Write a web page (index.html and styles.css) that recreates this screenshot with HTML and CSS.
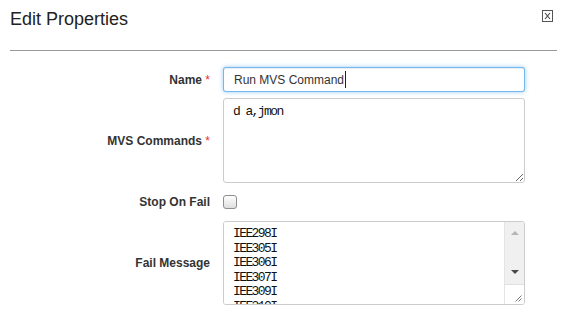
FILE: index.html
```html
<!DOCTYPE html>
<html>
<head>
<meta charset="utf-8">
<link rel="stylesheet" href="styles.css">
</head>
<body>
<header class="modal-header">
  <h3 class="title">Edit Properties</h3>
  <button class="close" type="button" aria-label="Close">
    <svg width="11" height="12" viewBox="0 0 11 12"><rect x="0.5" y="0.5" width="10" height="11" fill="#fff" stroke="#555"/><path d="M3 3 L8 9 M8 3 L3 9" stroke="#444" stroke-width="1.1" fill="none"/></svg>
  </button>
</header>
<form class="form">
  <label class="lbl" for="name">Name <span class="req">*</span></label>
  <div class="input-wrap">
    <input id="name" class="input is-focus" type="text" value="Run MVS Command">
    <span class="caret"></span>
  </div>

  <label class="lbl" for="cmds">MVS Commands <span class="req">*</span></label>
  <textarea id="cmds" class="textarea">d a,jmon</textarea>

  <label class="lbl" for="stop">Stop On Fail</label>
  <div class="check-cell"><input id="stop" class="check" type="checkbox"></div>

  <label class="lbl" for="msg">Fail Message</label>
  <div class="scroll-box">
    <textarea id="msg" class="textarea plain">IEE298I
IEE305I
IEE306I
IEE307I
IEE309I
IEE310I
IEE311I</textarea>
    <div class="scrollbar">
      <div class="track">
        <span class="arrow up"></span>
        <span class="arrow down"></span>
      </div>
      <div class="corner">
        <svg width="8" height="8" viewBox="0 0 8 8"><path d="M7.5 1.5 L1.5 7.5 M7.5 4.5 L4.5 7.5" stroke="#777" stroke-width="1" fill="none"/></svg>
      </div>
    </div>
  </div>
</form>
</body>
</html>
```

FILE: styles.css
```css
* { box-sizing: border-box; }
html, body { margin: 0; padding: 0; background: #fff; }
body {
  font-family: "Liberation Sans", Arial, sans-serif;
  color: #333;
  width: 566px;
  height: 311px;
  overflow: hidden;
}
.modal-header {
  margin: 0 9px 0 10px;
  height: 51px;
  border-bottom: 1px solid #9a9a9a;
  display: flex;
  justify-content: space-between;
  align-items: flex-start;
}
.title {
  margin: 0;
  padding-top: 9px;
  font-size: 18px;
  line-height: 20px;
  font-weight: normal;
  color: #222;
}
.close {
  margin: 10px 4px 0 0;
  padding: 0;
  border: 0;
  background: none;
  width: 11px;
  height: 12px;
  display: block;
}
.close svg { display: block; }
.form {
  margin-top: 16px;
  display: grid;
  grid-template-columns: 210px 302px;
  grid-template-rows: 25px 85px 26px 84px;
  column-gap: 13px;
  row-gap: 6px;
  align-items: center;
}
.lbl {
  justify-self: end;
  text-align: right;
  font-size: 12px;
  font-weight: bold;
  color: #333;
  white-space: nowrap;
}
.req { color: #e8322f; font-weight: normal; }
.input-wrap { position: relative; height: 25px; }
.input {
  display: block;
  width: 302px;
  height: 25px;
  margin: 0;
  padding: 0 10px;
  border: 1px solid #ccc;
  border-radius: 3px;
  font-family: "Liberation Sans", Arial, sans-serif;
  font-size: 12px;
  color: #333;
  outline: none;
}
.input.is-focus {
  border-color: rgba(82, 168, 236, 0.8);
  box-shadow: inset 0 1px 1px rgba(0,0,0,0.075), 0 0 4px rgba(82, 168, 236, 0.6);
}
.caret {
  position: absolute;
  left: 122px;
  top: 4px;
  width: 1px;
  height: 17px;
  background: #222;
}
.textarea {
  display: block;
  width: 302px;
  height: 85px;
  margin: 0;
  padding: 6px 9px;
  border: 1px solid #ccc;
  border-radius: 3px;
  font-family: "Liberation Mono", "Courier New", monospace;
  font-size: 13px;
  letter-spacing: -1.6px;
  line-height: 14.5px;
  color: #111;
  outline: none;
  overflow: hidden;
}
.check-cell { display: flex; align-items: center; height: 26px; }
.check {
  appearance: none;
  -webkit-appearance: none;
  width: 14px;
  height: 14px;
  margin: 0;
  border: 1px solid #8e8e8e;
  border-radius: 3px;
  background: linear-gradient(#ffffff, #dedede);
}
.scroll-box {
  display: flex;
  width: 302px;
  height: 84px;
  border: 1px solid #ccc;
  border-radius: 3px;
  overflow: hidden;
}
.textarea.plain {
  flex: 1;
  width: auto;
  height: 100%;
  border: 0;
  border-radius: 0;
  padding: 5px 9px 0;
  line-height: 14.6px;
  resize: none;
}
.scrollbar {
  width: 20px;
  display: flex;
  flex-direction: column;
  border-left: 1px solid #e4e4e4;
}
.track {
  flex: 1;
  background: #f0f0f0;
  display: flex;
  flex-direction: column;
  justify-content: space-between;
  align-items: center;
  padding: 9px 0 10px;
}
.arrow {
  width: 0;
  height: 0;
  border-left: 4px solid transparent;
  border-right: 4px solid transparent;
}
.arrow.up { border-bottom: 4px solid #b5b5b5; }
.arrow.down { border-top: 4px solid #4a4a4a; }
.corner {
  height: 20px;
  background: #fff;
  border-top: 1px solid #e0e0e0;
  display: flex;
  justify-content: flex-end;
  align-items: flex-end;
  padding: 0 2px 2px 0;
}
.corner svg { display: block; }
```
